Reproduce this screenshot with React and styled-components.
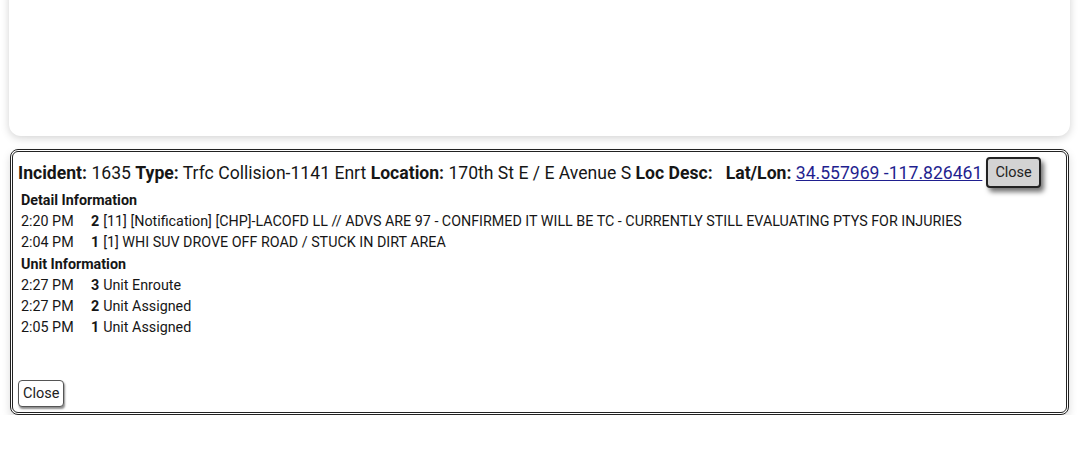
import * as React from "react";
import styled, { createGlobalStyle } from "styled-components";

const GlobalStyle = createGlobalStyle`
  html, body {
    margin: 0;
    padding: 0;
    background: #ffffff;
    font-family: Roboto, "Liberation Sans", Arial, sans-serif;
    color: #161616;
  }
`;

const details = [
  {
    time: "2:20 PM",
    seq: 2,
    text: "[11] [Notification] [CHP]-LACOFD LL // ADVS ARE 97 - CONFIRMED IT WILL BE TC - CURRENTLY STILL EVALUATING PTYS FOR INJURIES",
  },
  { time: "2:04 PM", seq: 1, text: "[1] WHI SUV DROVE OFF ROAD / STUCK IN DIRT AREA" },
];

const units = [
  { time: "2:27 PM", seq: 3, text: "Unit Enroute" },
  { time: "2:27 PM", seq: 2, text: "Unit Assigned" },
  { time: "2:05 PM", seq: 1, text: "Unit Assigned" },
];

const App = () => {
  return (
    <>
      <GlobalStyle />
      <Page>
        <MapCard />
        <Panel>
          <HeaderRow>
            <Summary>
              <b>Incident:</b> 1635 <b>Type:</b> Trfc Collision-1141 Enrt{" "}
              <b>Location:</b> 170th St E / E Avenue S <b>Loc Desc:</b>{" "}
              &nbsp;&nbsp;<b>Lat/Lon:</b> <CoordLink href="#">34.557969 -117.826461</CoordLink>
            </Summary>
            <CloseButton $raised>Close</CloseButton>
          </HeaderRow>
          <Section>
            <SectionTitle>Detail Information</SectionTitle>
            {details.map((d, i) => (
              <Row key={i}>
                <Time>{d.time}</Time>
                <Seq>{d.seq}</Seq>
                <span>{d.text}</span>
              </Row>
            ))}
          </Section>
          <Section>
            <SectionTitle>Unit Information</SectionTitle>
            {units.map((u, i) => (
              <Row key={i}>
                <Time>{u.time}</Time>
                <Seq>{u.seq}</Seq>
                <span>{u.text}</span>
              </Row>
            ))}
          </Section>
          <Footer>
            <CloseButton>Close</CloseButton>
          </Footer>
        </Panel>
      </Page>
    </>
  );
};

const Page = styled.div`
  display: flex;
  flex-direction: column;
  gap: 13px;
  padding: 0 9px;
`;

const MapCard = styled.div`
  height: 146px;
  margin-top: -10px;
  background: #fff;
  border-radius: 0 0 12px 12px;
  box-shadow: 0 2px 8px rgba(0, 0, 0, 0.18);
`;

const Panel = styled.div`
  margin: 0 1px;
  height: 266px;
  box-sizing: border-box;
  border: 3px double #222;
  border-radius: 8px;
  background: #fff;
  padding: 5px 6px 5px 5px;
  display: flex;
  flex-direction: column;
  box-shadow: 0 4px 8px rgba(0, 0, 0, 0.15);
`;

const HeaderRow = styled.div`
  display: flex;
  align-items: center;
  gap: 4px;
  margin-bottom: 2px;
`;

const Summary = styled.div`
  font-size: 17.6px;
  white-space: nowrap;
  b {
    font-weight: 700;
  }
`;

const CoordLink = styled.a`
  color: #1f1f8f;
  text-decoration: underline;
`;

const CloseButton = styled.button`
  font-family: Roboto, "Liberation Sans", Arial, sans-serif;
  font-size: 14.5px;
  color: #222;
  background: ${(p) => (p.$raised ? "#d3d3d3" : "#fff")};
  border: ${(p) => (p.$raised ? "2px solid #222" : "1px solid #555")};
  border-radius: 4px;
  padding: ${(p) => (p.$raised ? "5px 7px" : "4px 4px")};
  box-shadow: ${(p) =>
    p.$raised ? "3px 4px 5px rgba(0,0,0,0.55)" : "1px 2px 2px rgba(0,0,0,0.45)"};
  cursor: pointer;
`;

const Section = styled.div`
  display: flex;
  flex-direction: column;
  padding-left: 3px;
`;

const SectionTitle = styled.div`
  font-size: 14.3px;
  font-weight: 700;
  line-height: 21.2px;
`;

const Row = styled.div`
  display: flex;
  font-size: 14.3px;
  line-height: 21.2px;
  white-space: nowrap;
`;

const Time = styled.span`
  width: 70px;
`;

const Seq = styled.span`
  font-weight: 700;
  margin-right: 4px;
`;

const Footer = styled.div`
  margin-top: auto;
`;

export default App;
